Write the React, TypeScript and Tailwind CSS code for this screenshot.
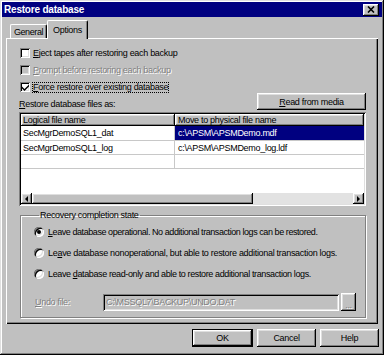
import React from "react";

const RAISED =
  "shadow-[inset_-1px_-1px_#000000,inset_1px_1px_#ffffff,inset_-2px_-2px_#808080,inset_2px_2px_#dfdfdf]";
const SUNKEN =
  "shadow-[inset_1px_1px_#808080,inset_-1px_-1px_#ffffff,inset_2px_2px_#000000,inset_-2px_-2px_#dfdfdf]";
const DIS = "text-[#808080] [text-shadow:1px_1px_0_#ffffff]";

function Check({ checked, disabled }: { checked?: boolean; disabled?: boolean }) {
  return (
    <div
      className={`w-[10px] h-[10px] shrink-0 flex items-center justify-center ${SUNKEN} ${
        disabled ? "bg-[#c0c0c0]" : "bg-white"
      }`}
    >
      {checked && (
        <svg width="7" height="7" viewBox="0 0 7 7">
          <path d="M0 2.5L2.5 5L7 0.5V2.5L2.5 7L0 4.5Z" fill="#000" />
        </svg>
      )}
    </div>
  );
}

function Radio({ on }: { on?: boolean }) {
  return (
    <div className="w-[10px] h-[10px] shrink-0 rounded-full bg-white shadow-[inset_1px_1px_#808080,inset_-1px_-1px_#ffffff,inset_2px_2px_#000000,inset_-2px_-2px_#dfdfdf] flex items-center justify-center">
      {on && <div className="w-[4px] h-[4px] rounded-full bg-black" />}
    </div>
  );
}

export default function App() {
  return (
    <div className="w-[384px] h-[355px] overflow-hidden bg-[#c0c0c0] p-[2px] flex flex-col font-['Liberation_Sans',Arial,sans-serif] text-[9px] leading-[12px] tracking-[-0.3px] text-black shadow-[inset_-1px_-1px_#000000,inset_1px_1px_#dfdfdf,inset_-2px_-2px_#808080,inset_2px_2px_#ffffff]">
      {/* Title bar */}
      <div className="h-[15px] shrink-0 bg-[#000080] flex items-center justify-between pl-[2px] pr-[3px]">
        <span className="text-white font-bold text-[10px] tracking-[-0.2px]">Restore database</span>
        <div className={`w-[16px] h-[12px] bg-[#c0c0c0] ${RAISED} flex items-center justify-center`}>
          <svg width="8" height="7" viewBox="0 0 8 7">
            <path d="M1 0.5L7 6.5M7 0.5L1 6.5" stroke="#000" strokeWidth="1.6" />
          </svg>
        </div>
      </div>

      {/* Tabs */}
      <div className="mx-[4px] h-[21px] shrink-0 flex items-end pl-[4px]">
        <div className="w-[37px] h-[14px] flex items-center justify-center border-t border-l border-white border-r border-r-black rounded-t-[2px] shadow-[inset_-1px_0_#808080] tracking-[-0.4px]">
          General
        </div>
        <div className="relative z-10 -mb-[1px] w-[41px] h-[19px] bg-[#c0c0c0] flex items-center justify-center pb-[1px] border-t border-l border-white border-r border-r-black rounded-t-[2px] shadow-[inset_-1px_0_#808080]">
          Options
        </div>
      </div>

      {/* Panel */}
      <div className="mx-[4px] h-[286px] shrink-0 bg-[#c0c0c0] shadow-[inset_1px_1px_#ffffff,inset_-1px_-1px_#000000,inset_-2px_-2px_#808080] pl-[13px] pr-[12px] pt-[9px] flex flex-col">
        <div className="h-[12px] flex items-center ml-[1px]">
          <Check />
          <span className="ml-[3px]">
            <u>E</u>ject tapes after restoring each backup
          </span>
        </div>
        <div className="h-[12px] mt-[5px] flex items-center ml-[1px]">
          <Check disabled />
          <span className={`ml-[3px] ${DIS}`}>
            <u>P</u>rompt before restoring each backup
          </span>
        </div>
        <div className="h-[12px] mt-[5px] flex items-center ml-[1px]">
          <Check checked />
          <span className="ml-[2px] border border-dotted border-black leading-[9px] h-[11px] flex items-center">
            <span>
              <u>F</u>orce restore over existing database
            </span>
          </span>
        </div>

        <div className="h-[17px] flex items-end justify-between">
          <span>
            <u>R</u>estore database files as:
          </span>
          <div className={`w-[109px] h-[17px] bg-[#c0c0c0] ${RAISED} flex items-center justify-center`}>
            <span>
              <u>R</u>ead from media
            </span>
          </div>
        </div>

        {/* Table */}
        <div className={`mt-[2px] h-[94px] bg-white ${SUNKEN} p-[2px] flex flex-col`}>
          <div className="h-[12px] flex shrink-0">
            <div className={`w-[154px] bg-[#c0c0c0] ${RAISED} pl-[2px] flex items-center`}>Logical file name</div>
            <div className={`flex-1 bg-[#c0c0c0] ${RAISED} pl-[3px] flex items-center`}>Move to physical file name</div>
          </div>
          <div className="h-[15px] flex border-b border-[#c8c8c8]">
            <div className="w-[154px] border-r border-[#c8c8c8] pl-[2px] flex items-center">SecMgrDemoSQL1_dat</div>
            <div className="flex-1 bg-[#000080] text-white pl-[3px] flex items-center">{"c:\\APSM\\APSMDemo.mdf"}</div>
          </div>
          <div className="h-[14px] flex border-b border-[#c8c8c8]">
            <div className="w-[154px] border-r border-[#c8c8c8] pl-[2px] flex items-center">SecMgrDemoSQL1_log</div>
            <div className="flex-1 pl-[3px] flex items-center">{"c:\\APSM\\APSMDemo_log.ldf"}</div>
          </div>
          <div className="h-[14px] flex border-b border-[#c8c8c8]">
            <div className="w-[154px] border-r border-[#c8c8c8]" />
            <div className="flex-1" />
          </div>
          <div className="flex-1" />
          <div className="h-[11px] flex shrink-0">
            <div className={`w-[11px] bg-[#c0c0c0] ${RAISED} flex items-center justify-center`}>
              <div className="w-0 h-0 border-y-[3px] border-y-transparent border-r-[3px] border-r-black" />
            </div>
            <div className={`w-[221px] bg-[#c0c0c0] ${RAISED}`} />
            <div className="flex-1 bg-[#e2e2e2]" />
            <div className={`w-[11px] bg-[#c0c0c0] ${RAISED} flex items-center justify-center`}>
              <div className="w-0 h-0 border-y-[3px] border-y-transparent border-l-[3px] border-l-black" />
            </div>
          </div>
        </div>

        {/* Group box */}
        <fieldset className="mt-[3px] ml-[1px] border border-[#808080] shadow-[inset_1px_1px_#ffffff,1px_1px_#ffffff] pl-[13px] pr-[9px] pb-[6px]">
          <legend className="ml-[5px] px-[1px] leading-[12px]">Recovery completion state</legend>
          <div className="h-[12px] mt-[5px] flex items-center gap-[4px]">
            <Radio on />
            <span className="tracking-[-0.43px]">
              <u>L</u>eave database operational. No additional transaction logs can be restored.
            </span>
          </div>
          <div className="h-[12px] mt-[9px] flex items-center gap-[4px]">
            <Radio />
            <span>
              Le<u>a</u>ve database nonoperational, but able to restore additional transaction logs.
            </span>
          </div>
          <div className="h-[12px] mt-[9px] flex items-center gap-[4px]">
            <Radio />
            <span className="tracking-[-0.38px]">
              Leave <u>d</u>atabase read-only and able to restore additional transaction logs.
            </span>
          </div>
          <div className="h-[18px] mt-[13px] flex items-center">
            <span className={`w-[69px] pl-[1px] ${DIS}`}>
              <u>U</u>ndo file:
            </span>
            <div className={`w-[236px] h-[17px] bg-[#c0c0c0] ${SUNKEN} pl-[3px] flex items-center`}>
              <span className={DIS}>{"C:\\MSSQL7\\BACKUP\\UNDO.DAT"}</span>
            </div>
            <div className={`ml-[2px] w-[15px] h-[18px] bg-[#c0c0c0] ${RAISED} flex items-end justify-center pb-[2px] leading-[8px]`}>
              <span className={DIS}>...</span>
            </div>
          </div>
        </fieldset>
      </div>

      {/* Buttons */}
      <div className="mt-[5px] mr-[3px] flex justify-end gap-[4px]">
        <div className="w-[61px] h-[18px] border border-black">
          <div className={`w-full h-full bg-[#c0c0c0] ${RAISED} flex items-center justify-center`}>OK</div>
        </div>
        <div className={`w-[59px] h-[18px] bg-[#c0c0c0] ${RAISED} flex items-center justify-center`}>Cancel</div>
        <div className={`w-[59px] h-[18px] bg-[#c0c0c0] ${RAISED} flex items-center justify-center`}>Help</div>
      </div>
    </div>
  );
}
